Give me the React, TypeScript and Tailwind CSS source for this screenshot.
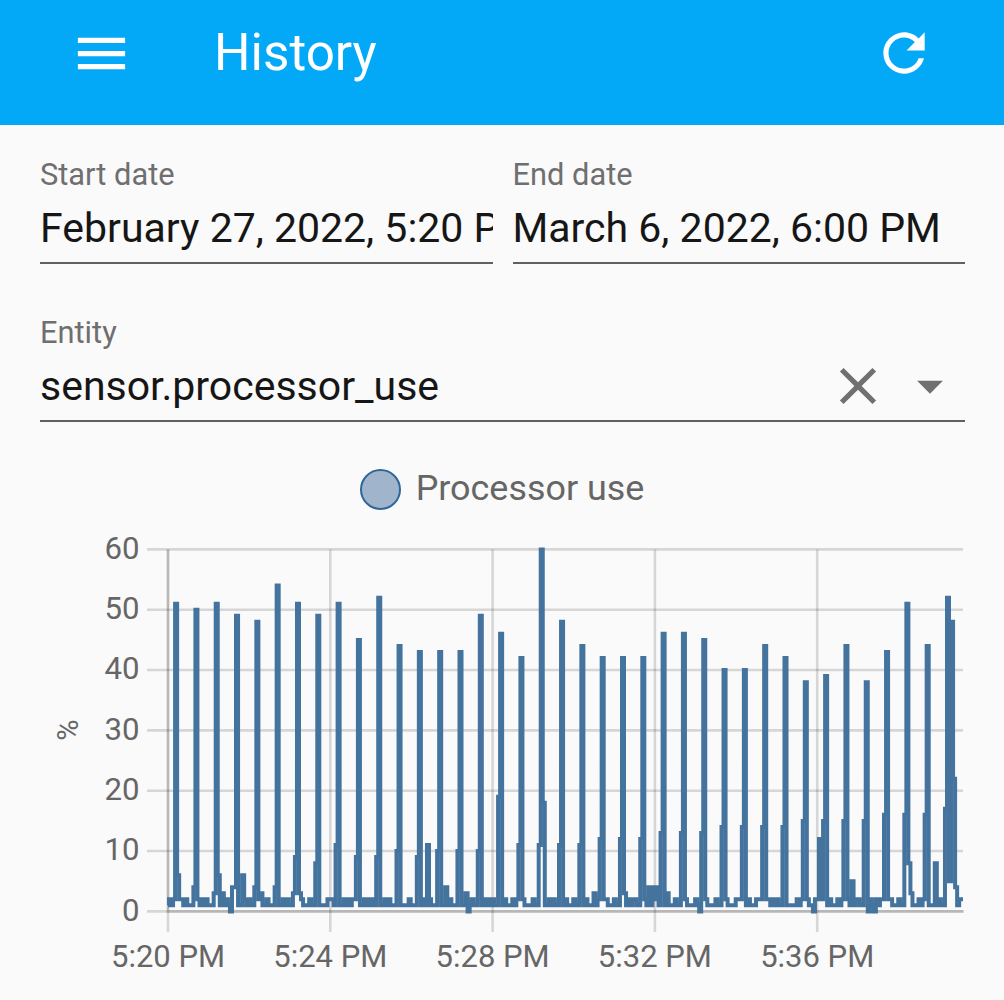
import type { ReactNode } from "react";

// One reading every three seconds, one row per half minute
const readings = [
  [2, 1, 2, 51, 6, 2, 2, 1, 2, 1],
  [1, 1, 4, 50, 2, 1, 2, 1, 2, 1],
  [1, 1, 3, 51, 6, 1, 3, 1, 2, 1],
  [0, 4, 4, 49, 1, 1, 6, 2, 1, 2],
  [1, 1, 4, 48, 2, 3, 1, 1, 2, 1],
  [1, 1, 4, 54, 1, 1, 2, 1, 2, 1],
  [1, 3, 9, 51, 3, 2, 1, 1, 1, 2],
  [1, 1, 8, 49, 1, 1, 1, 1, 2, 2],
  [2, 1, 11, 51, 1, 1, 2, 1, 2, 1],
  [2, 2, 9, 45, 1, 1, 2, 1, 2, 1],
  [2, 1, 9, 52, 1, 1, 2, 1, 2, 1],
  [1, 1, 10, 44, 1, 1, 1, 1, 2, 1],
  [1, 1, 9, 43, 1, 2, 1, 11, 2, 1],
  [1, 1, 10, 43, 1, 1, 4, 1, 2, 1],
  [1, 1, 10, 43, 1, 1, 3, 0, 1, 2],
  [1, 1, 10, 49, 1, 2, 1, 2, 1, 2],
  [1, 1, 19, 46, 1, 2, 1, 1, 1, 2],
  [1, 2, 11, 42, 2, 1, 1, 1, 1, 2],
  [1, 1, 11, 60, 18, 1, 1, 2, 1, 2],
  [1, 1, 11, 48, 1, 2, 1, 1, 1, 2],
  [1, 1, 11, 44, 1, 2, 1, 1, 1, 3],
  [1, 2, 12, 42, 2, 2, 1, 1, 1, 2],
  [1, 1, 12, 42, 3, 1, 2, 1, 2, 2],
  [1, 1, 12, 42, 2, 1, 4, 1, 4, 2],
  [4, 1, 13, 46, 1, 3, 1, 1, 1, 2],
  [1, 1, 13, 46, 2, 1, 1, 1, 1, 2],
  [1, 0, 13, 45, 2, 1, 1, 1, 1, 2],
  [1, 1, 14, 40, 2, 1, 1, 1, 1, 2],
  [2, 2, 14, 40, 1, 2, 1, 1, 1, 2],
  [2, 2, 14, 44, 2, 2, 1, 2, 1, 2],
  [1, 1, 14, 42, 1, 1, 1, 1, 1, 2],
  [1, 2, 15, 38, 2, 1, 1, 0, 2, 2],
  [12, 2, 15, 39, 1, 2, 1, 1, 1, 2],
  [1, 2, 15, 44, 2, 1, 5, 1, 2, 2],
  [1, 1, 15, 38, 0, 2, 1, 0, 2, 1],
  [2, 2, 16, 43, 2, 2, 1, 1, 1, 2],
  [1, 1, 16, 51, 8, 3, 1, 1, 1, 2],
  [1, 2, 16, 44, 1, 1, 1, 8, 1, 2],
  [1, 1, 17, 52, 5, 48, 22, 4, 1, 2],
].flat();

const PLOT = { left: 168, right: 963, top: 29.4, bottom: 391.4 };
const STEP = 2.0313;

const yTicks = [0, 10, 20, 30, 40, 50, 60];
const xTicks = ["5:20 PM", "5:24 PM", "5:28 PM", "5:32 PM", "5:36 PM"];

const yOf = (value: number) =>
  PLOT.bottom - (value / 60) * (PLOT.bottom - PLOT.top);

function stepPath(values: number[]) {
  const start = PLOT.left + 1;
  let d = `M${PLOT.left} ${yOf(1)}`;
  values.forEach((value, i) => {
    d += `H${(start + i * STEP).toFixed(2)}V${yOf(value).toFixed(2)}`;
  });
  return `${d}H${PLOT.right}`;
}

function HistoryChart() {
  return (
    <svg width="1004" height="480" viewBox="0 0 1004 480" className="block">
      <defs>
        <clipPath id="plot">
          <rect x={PLOT.left - 1.5} y="0" width={PLOT.right - PLOT.left + 1.5} height="480" />
        </clipPath>
      </defs>
      {yTicks.map((tick) => (
        <g key={tick}>
          <line
            x1="147"
            x2={PLOT.right}
            y1={yOf(tick)}
            y2={yOf(tick)}
            stroke="#000"
            strokeOpacity={0.14}
            strokeWidth="2.6"
          />
          <text x="139.5" y={yOf(tick) + 9.2} textAnchor="end" fontSize="31.2" fill="#666">
            {tick}
          </text>
        </g>
      ))}
      {xTicks.map((tick, i) => (
        <g key={tick}>
          <line
            x1={168 + i * 162.3}
            x2={168 + i * 162.3}
            y1={PLOT.top}
            y2="412"
            stroke="#000"
            strokeOpacity={0.14}
            strokeWidth="2.6"
          />
          <text x={168 + i * 162.3} y="446.8" textAnchor="middle" fontSize="31" fill="#666">
            {tick}
          </text>
        </g>
      ))}
      {/* Axis lines */}
      <path
        d={`M168 ${PLOT.top}V${PLOT.bottom}H${PLOT.right + 1}`}
        fill="none"
        stroke="#000"
        strokeOpacity={0.14}
        strokeWidth="2.6"
      />
      <text
        transform="translate(77.5 210) rotate(-90)"
        textAnchor="middle"
        fontSize="29"
        fill="#666"
      >
        %
      </text>
      <path
        d={stepPath(readings)}
        fill="none"
        stroke="#44739e"
        strokeWidth="4"
        clipPath="url(#plot)"
      />
    </svg>
  );
}

interface FieldProps {
  label: string;
  value: string;
  children?: ReactNode;
}

function Field({ label, value, children }: FieldProps) {
  return (
    <div className="min-w-0 flex-1 border-b-2 border-[#606060] h-[107px]">
      <div className="text-[30.8px] leading-9 text-[#6f6f6f]">{label}</div>
      <div className="flex items-center mt-[9px] h-[52px]">
        <div className="min-w-0 flex-1 overflow-hidden whitespace-nowrap text-[41px] leading-[52px] text-[#161616]">
          {value}
        </div>
        {children}
      </div>
    </div>
  );
}

export default function App() {
  return (
    <div className="w-[1004px] h-[1000px] overflow-hidden bg-[#fafafa] font-['Roboto',sans-serif]">
      <header className="flex items-center h-[125px] bg-[#03a9f6] pb-[19px] pl-[70px] pr-[69px] text-white">
        <svg viewBox="0 0 24 24" className="w-[63px] h-[63px]" fill="currentColor">
          <path d="M3,6H21V8H3V6M3,11H21V13H3V11M3,16H21V18H3V16Z" />
        </svg>
        <h1 className="flex-1 ml-[81px] text-[51.2px] leading-[60px]">History</h1>
        <svg viewBox="0 0 24 24" className="w-[62px] h-[62px]" fill="currentColor">
          <path d="M17.65,6.35C16.2,4.9 14.21,4 12,4A8,8 0 0,0 4,12A8,8 0 0,0 12,20C15.73,20 18.84,17.45 19.73,14H17.65C16.83,16.33 14.61,18 12,18A6,6 0 0,1 6,12A6,6 0 0,1 12,6C13.66,6 15.14,6.69 16.22,7.78L13,11H20V4L17.65,6.35Z" />
        </svg>
      </header>

      <div className="flex gap-5 pl-10 pr-[39px] pt-[31.5px]">
        <Field label="Start date" value="February 27, 2022, 5:20 PM" />
        <Field label="End date" value="March 6, 2022, 6:00 PM" />
      </div>

      <div className="flex pl-10 pr-[39px] pt-[51.5px]">
        <Field label="Entity" value="sensor.processor_use">
          <svg viewBox="0 0 24 24" className="w-[62px] h-[62px] mr-[10px]" fill="#707070">
            <path d="M19,6.41L17.59,5L12,10.59L6.41,5L5,6.41L10.59,12L5,17.59L6.41,19L12,13.41L17.59,19L19,17.59L13.41,12L19,6.41Z" />
          </svg>
          <svg viewBox="0 0 24 24" className="w-[62px] h-[62px] mr-1" fill="#707070">
            <path d="M7,10L12,15L17,10H7Z" />
          </svg>
        </Field>
      </div>

      <div className="flex items-center justify-center gap-[15px] h-[98px] pt-[36px]">
        <span className="w-[41px] h-[41px] rounded-full border-2 border-[#2f6799] bg-[#a0b5cc]" />
        <span className="-mt-[2px] text-[35.9px] leading-[44px] text-[#666]">Processor use</span>
      </div>

      <HistoryChart />
    </div>
  );
}
